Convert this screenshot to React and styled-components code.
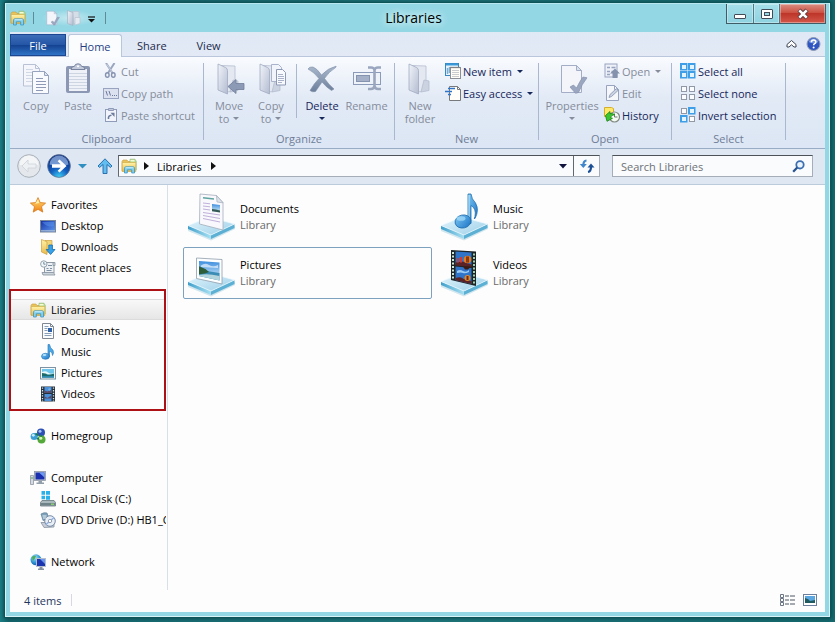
import React from 'react';
import styled, { createGlobalStyle, css } from 'styled-components';

const GlobalStyle = createGlobalStyle`
  * {
    box-sizing: border-box;
  }
  body {
    margin: 0;
    background: #1b7c80;
    font-family: 'Open Sans', 'Noto Sans', sans-serif;
    font-size: 11px;
    color: #000;
  }
  button, input {
    font: inherit;
    color: inherit;
  }
  button {
    display: flex;
    align-items: center;
    padding: 0;
    border: 0;
    background: none;
    white-space: nowrap;
  }
  svg {
    display: block;
    flex: none;
  }
`;

/* ---------- shared gradients ---------- */

const Grad = ({ id, from, to, x2 = 0, y2 = 1 }) => (
  <linearGradient id={id} x1="0" y1="0" x2={x2} y2={y2}>
    <stop offset="0" stopColor={from} />
    <stop offset="1" stopColor={to} />
  </linearGradient>
);

const DefsSvg = styled.svg`
  position: absolute;
  width: 0;
  height: 0;
`;

const Gradients = () => (
  <DefsSvg aria-hidden="true">
    <defs>
      <Grad id="folder" from="#fff3a8" to="#e9b94a" />
      <Grad id="note" from="#7cc8f5" to="#1a72c4" x2={1} />
      <Grad id="star" from="#ffe27a" to="#f07f12" />
      <Grad id="grey" from="#f1f4fa" to="#b3bcd0" x2={1} />
      <Grad id="screen" from="#1430a8" to="#5f9cf0" x2={1} />
      <Grad id="tray" from="#e4f6fd" to="#9ccfe8" x2={1} />
      <Grad id="traySide" from="#3f9fcb" to="#a8e0f2" x2={1} y2={0} />
      <Grad id="cross" from="#a9b8cc" to="#6c7f9b" />
      <Grad id="photo" from="#3d8ede" to="#e2f6fb" />
      <radialGradient id="orb" cx=".5" cy="1" r=".9">
        <stop offset="0" stopColor="#3fd4f7" />
        <stop offset=".45" stopColor="#1460c0" />
        <stop offset="1" stopColor="#0b2e80" />
      </radialGradient>
      <radialGradient id="globe" cx=".4" cy=".3" r=".8">
        <stop offset="0" stopColor="#9fe4f5" />
        <stop offset=".6" stopColor="#2a8fd0" />
        <stop offset="1" stopColor="#0e4d9a" />
      </radialGradient>
    </defs>
  </DefsSvg>
);

/* ---------- icons ---------- */

const Icon = ({ w = 16, h = 16, children }) => (
  <svg width={w} height={h} viewBox={`0 0 ${w} ${h}`} fill="none" aria-hidden="true">
    {children}
  </svg>
);

const LibrariesIcon = () => (
  <Icon>
    <path d="M1 3.5 2 2h4l1 1.5h6.5V13H1z" fill="#e8c35b" stroke="#c79a3a" strokeWidth=".6" />
    <path d="M9 1.2h5l1.2 2V12H9z" fill="#b9dc94" stroke="#8fb56d" strokeWidth=".6" />
    <path d="M9.5 2h4v1.4h-4z" fill="#f6fbd4" />
    <path d="M1.2 4.5h13.6V13.5H1.2z" fill="url(#folder)" stroke="#d0a640" strokeWidth=".6" />
    <path d="M3.5 15V10.2Q3.5 8.8 5 8.8h7q1.5 0 1.5 1.4V15h-2.8v-3.2H6.3V15z" fill="#7fd0f0" stroke="#2f8dbd" strokeWidth=".7" />
    <path d="M4.5 9.7h8" stroke="#dff6ff" strokeWidth=".8" />
  </Icon>
);

const CopyIcon = () => (
  <Icon w={32} h={32}>
    <path d="M3.5 1.5h12l4 4V23h-16z" fill="#f4f6fb" stroke="#b9c2d5" />
    <path d="M15.500 1.500v4h4" stroke="#b9c2d5" />
    <path d="M6 6.500h7M6 9.500h8M6 12.500h8M6 15.500h8M6 18.500h8" stroke="#d0d7e5" />
    <path d="M12.500 8.500h12l4 4v18h-16z" fill="#f8fafd" stroke="#98a3bd" />
    <path d="M24.500 8.500v4h4z" fill="#dfe5f0" stroke="#98a3bd" />
    <path d="M16 15.500h7M16 18.500h10M16 21.500h10M16 24.500h10M16 27.500h7" stroke="#8d99b5" />
  </Icon>
);

const PasteIcon = () => (
  <Icon w={32} h={32}>
    <rect x="4" y="3" width="24" height="27" rx="2" fill="#8c97b3" />
    <rect x="7" y="6" width="18" height="22" fill="#eef1f8" />
    <path d="M7 10.500h18M7 13.500h18M7 16.500h18M7 19.500h18M7 22.500h18M7 25.500h18" stroke="#cdd4e2" />
    <path d="M9 6.500Q9 3.500 12.500 3.200 13 .8 16 .8t3.500 2.400Q23 3.500 23 6.500z" fill="#c3cadb" stroke="#6d7997" strokeWidth=".9" />
    <circle cx="16" cy="3.200" r="1" fill="#fff" />
  </Icon>
);

const CutIcon = () => (
  <Icon>
    <path d="M3 0l6.500 10M11.500 0 5 10" stroke="#9aa6bf" strokeWidth="2" />
    <path d="M3.600 1l5.500 8" stroke="#e4e9f2" strokeWidth=".6" />
    <ellipse cx="4.300" cy="12" rx="1.800" ry="2.300" stroke="#8693b0" strokeWidth="1.400" />
    <ellipse cx="10.300" cy="12" rx="1.800" ry="2.300" stroke="#8693b0" strokeWidth="1.400" />
  </Icon>
);

const CopyPathIcon = () => (
  <Icon>
    <rect x=".5" y="3.500" width="15" height="10" fill="#dbe1ef" stroke="#97a3bf" />
    <path d="M3 6l1.500 4.500M6 6l1.500 4.500" stroke="#6b7a9d" />
    <path d="M9 10.500h1M11 10.500h1M13 10.500h1" stroke="#6b7a9d" />
  </Icon>
);

const ShortcutIcon = () => (
  <Icon>
    <rect x="2.500" y="2.500" width="11" height="12" fill="#f1f4fa" stroke="#8f9bb8" />
    <path d="M5.500 1.500h5v2h-5z" fill="#c3cadb" stroke="#8f9bb8" />
    <path d="M5.500 12Q5 8.500 8.500 8.200" stroke="#6b7a9d" strokeWidth="1.600" />
    <path d="M7.500 5.800h4V10z" fill="#6b7a9d" />
  </Icon>
);

const GreyFolder = () => (
  <>
    <path d="M8 2.500 22 3V26l-6 3-8-4z" fill="#e3e8f1" stroke="#b5bed1" strokeWidth=".8" />
    <path d="M20 17l5 1v9.500l-8 1.500z" fill="#cbd2e0" stroke="#b5bed1" strokeWidth=".8" />
    <path d="M5 1l7.500 3.500q2 1 2 3V31L5 27z" fill="url(#grey)" stroke="#a1abc2" strokeWidth=".8" />
  </>
);

const MoveToIcon = () => (
  <Icon w={32} h={32}>
    <GreyFolder />
    <path d="M15 23.500l8-7v4h8v6h-8v4z" fill="#8d9ab5" stroke="#6f7d9b" strokeWidth=".8" />
  </Icon>
);

const CopyToIcon = () => (
  <Icon w={32} h={32}>
    <GreyFolder />
    <path d="M16.500 1.500h7l3 3v14h-10z" fill="#f1f4fa" stroke="#a9b3ca" />
    <path d="M21.500 6.500h6l3 3V22h-9z" fill="#f8fafd" stroke="#8d99b5" />
    <path d="M23 11.500h5M23 13.500h6M23 15.500h6M23 17.500h6M23 19.500h4" stroke="#94a0bb" strokeWidth=".8" />
  </Icon>
);

const NewFolderIcon = () => (
  <Icon w={32} h={32}>
    <GreyFolder />
  </Icon>
);

const DeleteIcon = () => (
  <Icon w={32} h={32}>
    <path d="M2 6q1-2.500 5-2 4 1.500 8.500 8Q22 5 30 3.200q.8.800-1 1.800-6 3.500-10.500 10.500Q23 22 28 26l-2.500 1.500Q20 24 16 19q-4 6-6.500 9.500-3 1-5.500-1Q8 20.500 13 15.500 8 9 2 6z" fill="url(#cross)" stroke="#7d8da8" strokeWidth=".6" />
  </Icon>
);

const RenameIcon = () => (
  <Icon w={32} h={32}>
    <rect x="2.500" y="9.500" width="27" height="12" fill="#eef2f9" stroke="#8a9ab8" />
    <rect x="5.500" y="12.500" width="13" height="6" fill="#a3b0c8" stroke="#8593b0" />
    <path d="M17 4.500h3q3 0 3.500 2.500v16q-.5 3-3.500 3h-3M30 4.500h-3q-3 0-3.500 2.500v16q.5 3 3.500 3h3" stroke="#9aa6be" strokeWidth="2.600" />
  </Icon>
);

const NewItemIcon = () => (
  <Icon>
    <rect x=".5" y=".5" width="13" height="12" fill="#e8f4fc" stroke="#3a86c0" />
    <path d="M1 1.500h12" stroke="#3a9ad8" strokeWidth="2" />
    <path d="M2.500 5v6M4.500 4v6" stroke="#7aaed4" strokeWidth="1.500" />
    <rect x="5.500" y="4.500" width="10" height="11" fill="#fffdf5" stroke="#8c8f95" />
    <path d="M5.500 4.500h10" stroke="#777" strokeWidth="1.500" strokeDasharray="1 1" />
    <path d="M7 7.500h7M7 9.500h7M7 11.500h7M7 13.500h7" stroke="#c9cbcf" />
  </Icon>
);

const EasyAccessIcon = () => (
  <Icon>
    <path d="M4.500 1.500h8l3 3v11h-11z" fill="#fffef8" stroke="#77797d" />
    <path d="M12.500 1.500v3h3" stroke="#77797d" />
    <path d="M3 3.500h7M0 6.500h7M3 9.500h3" stroke="#2f74c8" strokeWidth="1.400" />
  </Icon>
);

const PropertiesIcon = ({ size = 32 }) => (
  <svg width={size} height={size} viewBox="0 0 32 32" fill="none" aria-hidden="true">
    <path d="M5.500 2.500h15l5 5v22h-20z" fill="#f3f5fb" stroke="#a3aec6" />
    <path d="M20.500 2.500v5h5z" fill="#dbe1ec" stroke="#a3aec6" />
    <path d="M14 24l3.500-2 3 3q4-8 6.500-11l4 .8Q26 21 22.500 29.500l-3 .8z" fill="#9ba7c0" stroke="#8491ad" strokeWidth=".7" />
  </svg>
);

const OpenIcon = () => (
  <Icon>
    <rect x="1" y="1" width="12" height="13" fill="#eef1f8" stroke="#97a3bf" />
    <path d="M3 4.500h3M3 8.500h3M7.500 4.500h4M7.500 8.500h2M3 11.500h3" stroke="#97a3bf" strokeWidth="1.400" />
    <path d="M11 5.500l5 5h-2.500V15h-5v-4.500H6z" fill="#8492ae" />
  </Icon>
);

const EditIcon = () => (
  <Icon>
    <path d="M2.500.500h8l4 4v11h-12z" fill="#f5f7fb" stroke="#97a3bf" />
    <path d="M10.500.500v4h4" stroke="#97a3bf" />
    <path d="M5 12.500l1-3L12.500 3.500l1.500 2-6.500 6z" fill="#cbd2e2" stroke="#8693b0" strokeWidth=".8" />
  </Icon>
);

const HistoryIcon = () => (
  <Icon>
    <path d="M.500.500h7l2 1v8h-9z" fill="#ffe96a" stroke="#d5ad2c" />
    <circle cx="10.500" cy="10" r="5" fill="#f6faf4" stroke="#808a80" strokeWidth="1.200" />
    <path d="M10.500 6.500V10h3" stroke="#6d776d" />
    <path d="M1.500 8.500 6 4.500v2.200q3-.7 4.500 1-3 0-4 2.800l2 .8-5.500 3z" fill="#3cc531" stroke="#17820f" strokeWidth=".8" />
  </Icon>
);

/* four squares, the ones listed in "on" are selected */
const SquaresIcon = ({ on = [] }) => (
  <Icon>
    {[[0, 0], [8, 0], [0, 8], [8, 8]].map(([x, y], i) =>
      on.includes(i) ? (
        <g key={i}>
          <rect x={x} y={y} width="7.500" height="7.500" fill="#3f9ee8" />
          <rect x={x + 2} y={y + 2} width="4" height="4" fill="#e4f4ff" />
        </g>
      ) : (
        <rect key={i} x={x + 1.5} y={y + 1.5} width="5" height="5" fill="#fafcff" stroke="#9299a6" />
      )
    )}
  </Icon>
);

const StarIcon = () => (
  <Icon>
    <path d="M8 .6l2.200 5 5.400.5-4.100 3.600 1.300 5.400L8 12.300l-4.800 2.800 1.300-5.400L.4 6.100l5.400-.5z" fill="url(#star)" stroke="#d9781a" strokeWidth=".8" />
    <path d="M8 2.500l1.200 3.600-4 .6z" fill="#fff2b0" />
  </Icon>
);

const DesktopIcon = () => (
  <Icon>
    <rect x=".5" y="2.500" width="15" height="11.500" fill="url(#screen)" stroke="#7a8798" />
    <path d="M1 12.800h14" stroke="#b3c3d8" />
    <path d="M2 4q6 6 12 4V4z" fill="#5b97ee" opacity=".5" />
  </Icon>
);

const DownloadsIcon = () => (
  <Icon>
    <path d="M5 1.500h7V13H5z" fill="#f0d67a" stroke="#cda13c" strokeWidth=".7" />
    <path d="M1.500.5 7 2.800V15.500L1.500 13z" fill="url(#folder)" stroke="#cda13c" strokeWidth=".7" />
    <path d="M8.800 6h3.600v4.500H15L10.600 15.500 6.200 10.500h2.600z" fill="#36a3e8" stroke="#1769ad" strokeWidth=".8" />
  </Icon>
);

const RecentIcon = () => (
  <Icon>
    <path d="M4.500 2.500H14v10.500H4.500z" fill="#eef1f4" stroke="#8f9aa5" />
    <path d="M2 12.500h11.500l1.500 2.500H3zM13 2.500h2v3h-2z" fill="#ccd4db" stroke="#8793a0" strokeWidth=".8" />
    <path d="M8 5.500h4M6.500 8.500h2M10 8.500h2M6.500 10.500h5" stroke="#7d8fa2" />
    <circle cx="3.800" cy="4" r="3.200" fill="#f2f8fa" stroke="#8d9aa5" strokeWidth=".9" />
    <path d="M3.800 2v2.200H5.500" stroke="#57738c" strokeWidth=".8" />
  </Icon>
);

const DocumentIcon = () => (
  <Icon>
    <path d="M2.500.500h8l3 3v12h-11z" fill="#fbfcfe" stroke="#7f8791" />
    <path d="M10.500.500v3h3" stroke="#7f8791" />
    <path d="M4.500 3.500h4M4.500 5.500h3M4.500 7.500h3M4.500 10.500h7M4.500 12.500h7" stroke="#8aa0b8" />
    <rect x="8" y="5" width="4" height="4" fill="#2f62a8" />
  </Icon>
);

const MusicIcon = () => (
  <Icon>
    <path d="M8 .5h1.500Q10 4 13 6.200q1.300 2.500-.5 5.300.3-3.500-3-4.500v5.500H8z" fill="#4aa8e6" stroke="#1d6fb4" strokeWidth=".6" />
    <ellipse cx="5.500" cy="12.300" rx="4" ry="3" fill="url(#note)" stroke="#1d6fb4" strokeWidth=".6" />
    <ellipse cx="4.500" cy="11" rx="1.800" ry="1" fill="#b5e1fa" />
  </Icon>
);

const PictureIcon = () => (
  <Icon>
    <rect x=".5" y="2.500" width="15" height="11.500" fill="#f7fafb" stroke="#7d93a3" />
    <rect x="2" y="4" width="12" height="8.500" fill="#6fc6ea" />
    <path d="M2 7q4-1.500 6 .5t6 .5v1.500H2z" fill="#e8f7f7" />
    <path d="M2 8q4 0 5 1.500 4 .5 7-1V12.500H2z" fill="#1d6a6b" />
    <path d="M2 11h12v1.500H2z" fill="#2c86b0" />
  </Icon>
);

const FilmHoles = ({ x }) => (
  <path d={`M${x} 1.500v14`} stroke="#d7e2ea" strokeWidth="1.300" strokeDasharray="1.300 1.300" />
);

const VideoIcon = () => (
  <Icon>
    <rect x="1" y=".5" width="14" height="15" fill="#23303c" />
    <FilmHoles x={2.5} />
    <FilmHoles x={13.5} />
    <path d="M4.500 1h7v6h-7zM4.500 8h7v7h-7z" fill="#4a8fd8" />
    <path d="M4.500 4.500l3 1 3.500-2V7h-6.500zM4.500 10.500l3 1.500 3.500-2.500v3h-6.500z" fill="#5f4a66" />
    <circle cx="9.500" cy="3.500" r="1.200" fill="#79b4e8" />
  </Icon>
);

const HomegroupIcon = () => (
  <Icon>
    <circle cx="4.200" cy="8.500" r="3.600" fill="#3b9fd6" />
    <circle cx="11" cy="4.500" r="4" fill="#2b4fb4" />
    <circle cx="11.500" cy="11.500" r="4" fill="#55a83a" />
    <circle cx="3.300" cy="7.300" r="1.400" fill="#c8effa" />
    <circle cx="10" cy="3.200" r="1.500" fill="#a5c4f5" />
    <circle cx="10.700" cy="10.200" r="1.600" fill="#d4f3b4" />
    <path d="M5.500 5.500l3 2M7 10.500l2 .5M11 7v2" stroke="#1d7a54" strokeWidth="1.600" />
  </Icon>
);

const ComputerIcon = () => (
  <Icon>
    <path d="M.5 5.500h3v9h-3z" fill="#d4dae0" stroke="#8c97a3" strokeWidth=".8" />
    <circle cx="2" cy="8" r=".8" fill="#3ca33c" />
    <rect x="4.500" y="1.500" width="11" height="9" fill="#c9d0da" stroke="#8c97a3" strokeWidth=".8" />
    <rect x="5.500" y="2.500" width="9" height="7" fill="#1a2fae" />
    <path d="M9 2.500h5.500v5z" fill="#6f9bf3" />
    <path d="M8.500 11h3.500v1.500h2V14H6.500v-1.500h2z" fill="#939eab" />
  </Icon>
);

const DiskIcon = () => (
  <Icon>
    <path d="M1.500 0h3.500v3.800H1.500zM6 0h4v3.800H6zM1.500 4.800h3.500v3.500H1.500zM6 4.800h4v4H6z" fill="#2cb0ea" />
    <path d="M.5 11.500 2 9.500h12l1.500 2v3.500h-15z" fill="#a9b8bd" stroke="#65777d" strokeWidth=".8" />
    <path d="M1 12h14v2.500H1z" fill="#6f8389" />
    <path d="M11 13.200h3" stroke="#8be36b" strokeWidth="1.200" />
  </Icon>
);

const DvdIcon = () => (
  <Icon>
    <path d="M1 2q3-2 6-1l2 6-6 1.500z" fill="#7fa2ba" stroke="#5d7f98" strokeWidth=".7" />
    <path d="M1 10.500h13V15L4 15.500z" fill="#c8ced8" stroke="#8792a1" strokeWidth=".8" />
    <circle cx="10" cy="9" r="5.300" fill="#e8eef6" stroke="#6c7f9a" strokeWidth=".9" />
    <path d="M10 9 14 5.500M10 9 6 12.500" stroke="#8fb0e2" strokeWidth="1.400" />
    <circle cx="10" cy="9" r="1.700" fill="#fff" stroke="#7b8da6" strokeWidth=".8" />
    <path d="M2.500 4h4M3 6h3" stroke="#f3f9fc" strokeWidth=".9" />
  </Icon>
);

const NetworkIcon = () => (
  <Icon>
    <circle cx="6" cy="5.800" r="5.500" fill="url(#globe)" />
    <path d="M2 3q2.500-2 4-1l-1 2.500L3 7zM6 7l3-1 1 2-2.500 2.500z" fill="#4fae5a" />
    <rect x="6.500" y="4.500" width="9" height="8" fill="#1b34b0" stroke="#b5c0cc" />
    <path d="M10 5h5v5z" fill="#6c98f0" />
    <path d="M9.500 13h3v1.500h1.500V16H8v-1.500h1.500z" fill="#8793a1" />
  </Icon>
);

/* ---------- large library icons ---------- */

const Tray = () => (
  <>
    <path d="M1 35v3l23 9.500L48 36v-3z" fill="#8fc4da" opacity=".4" />
    <path d="M1 32.500 24 42V46L1 36z" fill="url(#traySide)" />
    <path d="M24 42 47.500 31v4L24 46z" fill="#5cb0d3" />
    <path d="M1 32.500 22 24l25.500 7L24 42z" fill="url(#tray)" stroke="#f2fbff" strokeWidth=".7" />
  </>
);

const DocumentsLarge = () => (
  <Icon w={48} h={48}>
    <Tray />
    <path d="M13 1 29.500 2.500l6.500 7V37L12.500 31z" fill="#f8f8fd" stroke="#a3adbb" strokeWidth=".8" />
    <path d="M29.500 2.500l.5 6.500 6 .8z" fill="#dde3ea" stroke="#a3adbb" strokeWidth=".7" />
    <path d="M16 4.800l11 1.200" stroke="#5fa49f" strokeWidth="1.600" />
    <path d="M16 10l7 .8M16 13l7 .8M16 16l7 1M16 19.500l17 2.500M16 22.500l17 3M16 25.500l17 3.500" stroke="#c0b0da" strokeWidth="1" />
    <path d="M25 11l8 1v7.500l-8-1.200z" fill="url(#photo)" />
    <path d="M25 16l4 .5 4 1v2l-8-1.200z" fill="#355a56" />
  </Icon>
);

const PicturesLarge = () => (
  <Icon w={48} h={48}>
    <Tray />
    <path d="M9.500 9 35 10.500v24.500L9.500 29.500z" fill="#fdfeff" stroke="#8f9dac" strokeWidth=".8" />
    <path d="M12 12l20.500 1.400v18L12 27z" fill="url(#photo)" />
    <path d="M14 16.500q4-3 8-.5t9 0v3l-17-1z" fill="#fff" opacity=".6" />
    <path d="M12 17q4 1.500 8 5l12.500 2v7.400L12 27z" fill="#3c8db5" />
    <path d="M12 17.500q6 1.500 10 5.500-5 2.500-10 2z" fill="#2e5d3a" />
    <path d="M12 26q8-2 20.500 1v4.400L12 27z" fill="#b5d5dc" />
  </Icon>
);

const MusicLarge = () => (
  <Icon w={48} h={48}>
    <Tray />
    <path d="M28 1h3q.5 5 4.500 9 4 7-.5 15.500-1.500 1 0-2 1.500-8-4-11v18h-3z" fill="url(#note)" stroke="#1f6cac" strokeWidth=".8" />
    <path d="M29 2v26" stroke="#bfe7fb" />
    <ellipse cx="23" cy="28.500" rx="8" ry="6.500" fill="url(#note)" stroke="#1f6cac" strokeWidth=".8" transform="rotate(-12 23 28.500)" />
    <ellipse cx="21" cy="25.500" rx="4.500" ry="2.300" fill="#9fd8f8" opacity=".8" />
  </Icon>
);

const VideosLarge = () => (
  <Icon w={48} h={48}>
    <Tray />
    <path d="M11 1 36 2.500V37L11 31z" fill="#1d2426" />
    <path d="M13 3v28" stroke="#cfe8d8" strokeWidth="2" strokeDasharray="2 1.500" />
    <path d="M34 4.500v31" stroke="#9fd0b0" strokeWidth="2" strokeDasharray="2 1.500" />
    <path d="M15.500 2.500l16 1v13l-16-1zM15.500 17.500l16 1.500V35l-16-3.800z" fill="#2f74c9" />
    <path d="M15.500 13.500l7-1 9 3v2.500l-16-1.500zM15.500 29q6-2 8 1l8 2v3l-16-3.800z" fill="#5b2325" />
    <path d="M17 9h2v4.500h-2zM20 8h2v5.500h-2z" fill="#d2382c" />
    <circle cx="27.500" cy="10.500" r="3.800" fill="#e87a1c" />
    <path d="M26 7.500h3v6h-3z" fill="#8a3a14" />
    <path d="M23 17.500h8l-3 3h-3z" fill="#3b1b12" />
    <path d="M17 22q3-2 6 0t6-1v2q-4 2-6 1t-6 0z" fill="#9ccbf2" />
    <circle cx="27.500" cy="29" r="3" fill="#e08a2a" />
    <path d="M26.500 27h2v4h-2z" fill="#7a2a14" />
  </Icon>
);

/* ---------- window frame ---------- */

const Desktop = styled.div`
  display: flex;
  min-height: 100vh;
  padding: 3px 5px 5px;
  background: linear-gradient(90deg, #1a8086, #14656d 1%, #1d777c 50%, #14696e);
`;

const Window = styled.div`
  display: flex;
  flex: 1;
  min-width: 0;
  flex-direction: column;
  padding: 0 4px 4px;
  border: 1px solid #d8f4f8;
  border-top-color: #b7e8f0;
  background: #93d7e4;
  box-shadow: 0 0 0 1px #0d5459, 0 0 4px 1px rgba(0, 30, 35, 0.6);
`;

const TitleBar = styled.header`
  display: grid;
  grid-template-columns: 1fr auto 1fr;
  height: 28px;
`;

const QuickAccess = styled.div`
  display: flex;
  align-items: center;
  gap: 7px;
  height: 28px;
`;

const QuickTools = styled.div`
  display: flex;
  align-items: center;
  gap: 6px;
  padding: 0 3px;
  background: radial-gradient(closest-side, rgba(255, 255, 255, 0.45), rgba(255, 255, 255, 0));
`;

const QuickLine = styled.span`
  width: 1px;
  height: 12px;
  background: #5b8c98;
`;

const Title = styled.h1`
  margin: 0 8px 0 0;
  font-size: 14px;
  font-weight: 400;
  line-height: 28px;
  text-shadow: 0 0 6px #e6fafd, 0 0 10px #e6fafd;
`;

const WindowButtons = styled.div`
  display: flex;
  justify-self: end;
  height: 20px;
  margin-right: -1px;
  border: 1px solid #3f5d66;
  border-top: 0;
`;

const WindowButton = styled.button`
  justify-content: center;
  width: ${(props) => (props.$close ? '46px' : '26px')};
  border-left: ${(props) => (props.$first ? '0' : '1px solid #4f7b86')};
  background: ${(props) =>
    props.$close ? 'linear-gradient(#dc8f83, #cc5243 45%, #bd3629 50%, #d3574a)' : 'linear-gradient(#a5dfea, #8fd3e0)'};
  box-shadow: inset 0 0 0 1px rgba(255, 255, 255, 0.35);
`;

/* ---------- ribbon ---------- */

const Tabs = styled.nav`
  display: flex;
  align-items: flex-end;
  height: 25px;
  border-bottom: 1px solid #b9c6dc;
  background: linear-gradient(#dfe8f5, #e3eaf6);
`;

const Tab = styled.button`
  justify-content: center;
  height: 22px;
  padding: 0 15px;
  color: #1c2a4c;
  ${(props) =>
    props.$file &&
    css`
      width: 56px;
      margin-right: 2px;
      border: 1px solid #1d4690;
      color: #fff;
      background: linear-gradient(#3c6db8, #2456a6 48%, #14418f 50%, #2f73c6);
    `}
  ${(props) =>
    props.$active &&
    css`
      width: 54px;
      height: 23px;
      margin-bottom: -1px;
      padding: 0;
      border: 1px solid #b9c6dc;
      border-bottom: 0;
      border-radius: 3px 3px 0 0;
      color: #1e3f86;
      background: #fbfcfe;
    `}
`;

const TabTools = styled.div`
  display: flex;
  align-items: center;
  align-self: center;
  gap: 9px;
  margin-left: auto;
  padding-right: 4px;
`;

const Ribbon = styled.section`
  display: flex;
  align-items: flex-start;
  height: 92px;
  padding-top: 3px;
  border-bottom: 1px solid #9aabc5;
  background: linear-gradient(#f9fbfe, #e2eaf6 45%, #dce6f4);
`;

const Group = styled.div`
  width: ${(props) => props.$width}px;
`;

const GroupBody = styled.div`
  display: flex;
  height: 71px;
  padding-left: ${(props) => props.$indent || 4}px;
`;

const GroupName = styled.div`
  line-height: 16px;
  text-align: center;
  color: #6f7d97;
`;

const Line = styled.span`
  width: 1px;
  height: ${(props) => (props.$inner ? '54px' : '77px')};
  margin: ${(props) => (props.$inner ? '4px 4px 0' : '3px 0 0')};
  background: #a9b7cf;
`;

const BigButton = styled.button`
  flex-direction: column;
  width: ${(props) => props.$width || 42}px;
  padding-top: 3px;
  line-height: 13px;
  color: ${(props) => (props.$on ? '#16275a' : '#858c9b')};
`;

const BigLabel = styled.span`
  display: flex;
  flex-direction: column;
  align-items: center;
  margin-top: 4px;
`;

const LabelLine = styled.span`
  display: flex;
  align-items: center;
  justify-content: center;
  gap: 4px;
  height: 13px;
`;

const SmallColumn = styled.div`
  display: flex;
  flex-direction: column;
  padding-left: ${(props) => props.$left || 3}px;
`;

const SmallButton = styled.button`
  gap: 2px;
  height: 22px;
  color: ${(props) => (props.$on ? '#16275a' : '#858c9b')};
`;

const Caret = styled.span`
  border: 3px solid transparent;
  border-top-color: currentColor;
  border-bottom: 0;
  margin-left: ${(props) => (props.$gap ? '3px' : '0')};
`;

/* ---------- address row ---------- */

const NavRow = styled.div`
  display: flex;
  align-items: center;
  height: 36px;
  padding: 0 12px 1px 7px;
  border-bottom: 1px solid #bccbdc;
  background: #dfe8f2;
`;

const NavButton = styled.button`
  margin-right: ${(props) => props.$gap || 0}px;
  color: ${(props) => props.$color || 'inherit'};
`;

const Address = styled.div`
  display: flex;
  align-items: center;
  flex: 1;
  min-width: 0;
  height: 22px;
  padding-left: 2px;
  border: 1px solid #a5adb8;
  border-top-color: #4d5258;
  border-left-color: #62686f;
  background: #f9fbfd;
`;

const Crumb = styled.button`
  padding: 0 7px;
`;

const AddressButton = styled.button`
  align-self: stretch;
  justify-content: center;
  width: ${(props) => props.$width}px;
  margin-left: ${(props) => (props.$push ? 'auto' : '0')};
  border-left: ${(props) => (props.$push ? '0' : '1px solid #62686f')};
`;

const SearchBox = styled.label`
  display: flex;
  align-items: center;
  width: 201px;
  height: 22px;
  margin-left: 12px;
  padding: 0 7px 0 8px;
  border: 1px solid #a5adb8;
  border-top-color: #4d5258;
  background: #f9fbfd;
`;

const SearchInput = styled.input`
  flex: 1;
  min-width: 0;
  padding: 0;
  border: 0;
  outline: 0;
  background: none;
  &::placeholder {
    color: #6d7176;
    opacity: 1;
  }
`;

/* ---------- body ---------- */

const Body = styled.main`
  display: flex;
  flex: 1;
  background: #fdfdfd;
`;

const Sidebar = styled.aside`
  display: flex;
  flex: none;
  flex-direction: column;
  gap: 21px;
  width: 158px;
  padding-top: 9px;
  border-right: 1px solid #d9dfe8;
`;

const TreeGroup = styled.div`
  position: relative;
  ${(props) =>
    props.$marked &&
    css`
      &::after {
        content: '';
        position: absolute;
        inset: -10px 1px -7px -1px;
        border: 2px solid #ad1015;
        pointer-events: none;
      }
    `}
`;

const TreeItem = styled.a`
  display: flex;
  align-items: center;
  gap: 5px;
  height: 21px;
  margin-right: 1px;
  padding-left: ${(props) => (props.$child ? '30px' : '20px')};
  overflow: hidden;
  white-space: nowrap;
  color: #000;
  text-decoration: none;
  ${(props) =>
    props.$selected &&
    css`
      border: solid #dcdcdc;
      border-width: 1px 0;
      background: linear-gradient(#f8f8f8, #e6e6e6);
    `}
`;

const Files = styled.section`
  display: grid;
  flex: 1;
  align-content: start;
  grid-template-columns: repeat(auto-fill, 249px);
  gap: 4px;
  padding: 6px 15px;
`;

const Tile = styled.a`
  display: flex;
  align-items: center;
  gap: 5px;
  height: 52px;
  padding: 0 3px;
  border: 1px solid ${(props) => (props.$focused ? '#7da2c0' : 'transparent')};
  border-radius: 2px;
  line-height: 16px;
  color: #000;
  text-decoration: none;
`;

const Muted = styled.div`
  color: #6a6a6a;
`;

const StatusBar = styled.footer`
  display: flex;
  align-items: center;
  height: 22px;
  padding: 0 8px 2px 14px;
  color: #1f3560;
  background: #fdfdfd;
`;

const StatusLine = styled.span`
  width: 1px;
  height: 12px;
  margin-left: 10px;
  background: #d5dae2;
`;

const Views = styled.div`
  display: flex;
  gap: 8px;
  margin-left: auto;
`;

/* ---------- pieces ---------- */

const Big = ({ icon, lines, caret, below, on, width }) => (
  <BigButton $on={on} $width={width}>
    {icon}
    <BigLabel>
      {lines.map((line, i) => (
        <LabelLine key={line}>
          {line}
          {caret && i === lines.length - 1 && <Caret />}
        </LabelLine>
      ))}
      {below && (
        <LabelLine>
          <Caret />
        </LabelLine>
      )}
    </BigLabel>
  </BigButton>
);

const Small = ({ icon, label, caret, on }) => (
  <SmallButton $on={on}>
    {icon}
    {label}
    {caret && <Caret $gap />}
  </SmallButton>
);

const tree = [
  [
    { label: 'Favorites', icon: <StarIcon /> },
    { label: 'Desktop', icon: <DesktopIcon />, child: true },
    { label: 'Downloads', icon: <DownloadsIcon />, child: true },
    { label: 'Recent places', icon: <RecentIcon />, child: true },
  ],
  [
    { label: 'Libraries', icon: <LibrariesIcon />, selected: true },
    { label: 'Documents', icon: <DocumentIcon />, child: true },
    { label: 'Music', icon: <MusicIcon />, child: true },
    { label: 'Pictures', icon: <PictureIcon />, child: true },
    { label: 'Videos', icon: <VideoIcon />, child: true },
  ],
  [{ label: 'Homegroup', icon: <HomegroupIcon /> }],
  [
    { label: 'Computer', icon: <ComputerIcon /> },
    { label: 'Local Disk (C:)', icon: <DiskIcon />, child: true },
    { label: 'DVD Drive (D:) HB1_C', icon: <DvdIcon />, child: true },
  ],
  [{ label: 'Network', icon: <NetworkIcon /> }],
];

const libraries = [
  { name: 'Documents', icon: <DocumentsLarge /> },
  { name: 'Music', icon: <MusicLarge /> },
  { name: 'Pictures', icon: <PicturesLarge />, focused: true },
  { name: 'Videos', icon: <VideosLarge /> },
];

const Header = () => (
  <TitleBar>
    <QuickAccess>
      <LibrariesIcon />
      <QuickLine />
      <QuickTools>
        <button aria-label="Properties">
          <PropertiesIcon size={16} />
        </button>
        <button aria-label="New folder">
          <Icon>
            <path d="M6 1.500h7V13l-5 1z" fill="#d5dde6" stroke="#b7c3d0" strokeWidth=".7" />
            <path d="M1.500.5 7 2.500V15.500L1.500 13.500z" fill="url(#grey)" stroke="#a5b2c2" strokeWidth=".7" />
            <path d="M9 7.500h5v6L9 15z" fill="#e5ebf2" stroke="#b7c3d0" strokeWidth=".7" />
          </Icon>
        </button>
        <button aria-label="Customize Quick Access Toolbar">
          <Icon w={7} h={16}>
            <path d="M0 7h7" stroke="#111" strokeWidth="1.200" />
            <path d="M0 9h7l-3.500 3.500z" fill="#111" />
          </Icon>
        </button>
      </QuickTools>
      <QuickLine />
    </QuickAccess>
    <Title>Libraries</Title>
    <WindowButtons>
      <WindowButton $first aria-label="Minimize">
        <Icon w={14}>
          <rect x="1.500" y="8.500" width="11" height="4" rx=".5" fill="#fff" stroke="#434a58" />
        </Icon>
      </WindowButton>
      <WindowButton aria-label="Maximize">
        <Icon w={14}>
          <rect x="1.500" y="3.500" width="11" height="9" rx=".5" fill="#fff" stroke="#434a58" />
          <rect x="4.500" y="6.500" width="5" height="3" fill="#93d7e4" stroke="#434a58" />
        </Icon>
      </WindowButton>
      <WindowButton $close aria-label="Close">
        <Icon w={14}>
          <path d="M3 4l8 8M11 4l-8 8" stroke="#5b3b40" strokeWidth="4.400" />
          <path d="M3.300 4.300l7.400 7.400M10.700 4.300l-7.400 7.400" stroke="#fff" strokeWidth="2.600" />
        </Icon>
      </WindowButton>
    </WindowButtons>
  </TitleBar>
);

const RibbonTabs = () => (
  <Tabs>
    <Tab $file>File</Tab>
    <Tab $active>Home</Tab>
    <Tab>Share</Tab>
    <Tab>View</Tab>
    <TabTools>
      <button aria-label="Minimize the Ribbon">
        <Icon w={11} h={10}>
          <path d="M1 5.500 5.500 1.500 10 5.500V8L8 8 5.500 5.800 3 8H1z" fill="#fff" stroke="#3c4350" />
        </Icon>
      </button>
      <button aria-label="Help">
        <Icon w={15}>
          <circle cx="7.500" cy="8" r="6.500" fill="#2f55c0" stroke="#8f9bb5" />
          <path d="M2.500 6Q4 2.500 7.500 2.500t5 3.500q-5 2.500-10 0z" fill="#90aef0" opacity=".7" />
          <path d="M5.300 6.200q.2-2.200 2.300-2.200t2.200 1.900q0 1.200-1.200 1.800-1 .6-1 1.600" stroke="#fff" strokeWidth="1.500" />
          <circle cx="7.600" cy="11.600" r="1" fill="#fff" />
        </Icon>
      </button>
    </TabTools>
  </Tabs>
);

const RibbonBar = () => (
  <Ribbon>
    <Group $width={193}>
      <GroupBody $indent={5}>
        <Big icon={<CopyIcon />} lines={['Copy']} />
        <Big icon={<PasteIcon />} lines={['Paste']} />
        <SmallColumn $left={4}>
          <Small icon={<CutIcon />} label="Cut" />
          <Small icon={<CopyPathIcon />} label="Copy path" />
          <Small icon={<ShortcutIcon />} label="Paste shortcut" />
        </SmallColumn>
      </GroupBody>
      <GroupName>Clipboard</GroupName>
    </Group>
    <Line />
    <Group $width={190}>
      <GroupBody>
        <Big icon={<MoveToIcon />} lines={['Move', 'to']} caret />
        <Big icon={<CopyToIcon />} lines={['Copy', 'to']} caret />
        <Line $inner />
        <Big icon={<DeleteIcon />} lines={['Delete']} below on />
        <Big icon={<RenameIcon />} lines={['Rename']} width={47} />
      </GroupBody>
      <GroupName>Organize</GroupName>
    </Group>
    <Line />
    <Group $width={143}>
      <GroupBody>
        <Big icon={<NewFolderIcon />} lines={['New', 'folder']} />
        <SmallColumn $left={4}>
          <Small icon={<NewItemIcon />} label="New item" caret on />
          <Small icon={<EasyAccessIcon />} label="Easy access" caret on />
        </SmallColumn>
      </GroupBody>
      <GroupName>New</GroupName>
    </Group>
    <Line />
    <Group $width={132}>
      <GroupBody $indent={5}>
        <Big icon={<PropertiesIcon />} lines={['Properties']} below width={56} />
        <SmallColumn $left={4}>
          <Small icon={<OpenIcon />} label="Open" caret />
          <Small icon={<EditIcon />} label="Edit" />
          <Small icon={<HistoryIcon />} label="History" on />
        </SmallColumn>
      </GroupBody>
      <GroupName>Open</GroupName>
    </Group>
    <Line />
    <Group $width={113}>
      <GroupBody>
        <SmallColumn $left={4}>
          <Small icon={<SquaresIcon on={[0, 1, 2, 3]} />} label="Select all" on />
          <Small icon={<SquaresIcon />} label="Select none" on />
          <Small icon={<SquaresIcon on={[1, 2]} />} label="Invert selection" on />
        </SmallColumn>
      </GroupBody>
      <GroupName>Select</GroupName>
    </Group>
    <Line />
  </Ribbon>
);

const AddressRow = () => (
  <NavRow>
    <NavButton $gap={6} aria-label="Back">
      <Icon w={24} h={24}>
        <circle cx="12" cy="12" r="11.300" fill="#e4e8ec" stroke="#a9b0b8" />
        <path d="M2.500 11a9.500 9.500 0 0 1 19 0z" fill="#f3f5f7" />
        <path d="M5 12l6-6v4h8v4h-8v4z" fill="#eef1f4" stroke="#cdd2d8" strokeWidth=".8" />
      </Icon>
    </NavButton>
    <NavButton $gap={7} aria-label="Forward">
      <Icon w={24} h={24}>
        <circle cx="12" cy="12" r="11.400" fill="url(#orb)" stroke="#5f7494" strokeWidth=".8" />
        <path d="M2.500 10.500a9.500 9 0 0 1 19 0q-9.500 3-19 0z" fill="#a9c4ee" opacity=".65" />
        <path d="M19.500 12l-7 6.500-1.800-1.800 3-3H5v-3.400h8.700l-3-3 1.800-1.800z" fill="#fff" />
      </Icon>
    </NavButton>
    <NavButton $gap={10} $color="#2f8fc0" aria-label="Recent locations">
      <Icon w={9} h={6}>
        <path d="M0 1h9L4.500 5.500z" fill="currentColor" />
      </Icon>
    </NavButton>
    <NavButton $gap={5} aria-label="Up">
      <Icon w={16}>
        <path d="M8 .8 15 8l-1.600 1.500L10 6.500V15.500H6V6.500L2.600 9.500 1 8z" fill="#62bdf0" stroke="#1d68a8" strokeWidth=".9" />
      </Icon>
    </NavButton>
    <Address>
      <LibrariesIcon />
      <NavButton $gap={1} aria-label="Locations">
        <Icon w={12}>
          <path d="M7 4l5 4-5 4z" fill="#111" />
        </Icon>
      </NavButton>
      <Crumb>Libraries</Crumb>
      <Icon w={7} h={8}>
        <path d="M2 0l5 4-5 4z" fill="#111" />
      </Icon>
      <AddressButton $push $width={20} aria-label="Previous locations">
        <Icon w={8} h={5}>
          <path d="M0 0h8L4 4.500z" fill="#10143c" />
        </Icon>
      </AddressButton>
      <AddressButton $width={26} aria-label="Refresh">
        <Icon>
          <path d="M7.500 2.500Q4.500 2.800 4.300 7" stroke="#3f86cc" strokeWidth="2.200" />
          <path d="M.8 6h7L4.300 10z" fill="#3f86cc" />
          <path d="M9 14q3-.5 3-5" stroke="#1d4f96" strokeWidth="2.200" />
          <path d="M8.500 9.500h7L12 5.500z" fill="#1d4f96" />
        </Icon>
      </AddressButton>
    </Address>
    <SearchBox>
      <SearchInput type="text" placeholder="Search Libraries" aria-label="Search Libraries" />
      <Icon w={13} h={13}>
        <circle cx="8" cy="4.800" r="3.700" fill="#eaf4fd" stroke="#3d6fb0" strokeWidth="1.800" />
        <path d="M5.200 7.600 1.200 11.800" stroke="#27518f" strokeWidth="2.200" />
      </Icon>
    </SearchBox>
  </NavRow>
);

const App = () => (
  <Desktop>
    <GlobalStyle />
    <Gradients />
    <Window>
      <Header />
      <RibbonTabs />
      <RibbonBar />
      <AddressRow />
      <Body>
        <Sidebar>
          {tree.map((group, i) => (
            <TreeGroup key={i} $marked={i === 1}>
              {group.map((item) => (
                <TreeItem key={item.label} href="#" $child={item.child} $selected={item.selected}>
                  {item.icon}
                  {item.label}
                </TreeItem>
              ))}
            </TreeGroup>
          ))}
        </Sidebar>
        <Files>
          {libraries.map((library) => (
            <Tile key={library.name} href="#" $focused={library.focused}>
              {library.icon}
              <div>
                <div>{library.name}</div>
                <Muted>Library</Muted>
              </div>
            </Tile>
          ))}
        </Files>
      </Body>
      <StatusBar>
        4 items
        <StatusLine />
        <Views>
          <button aria-label="Details view">
            <Icon>
              <path d="M1.500 2.500h3v3h-3zM1.500 6.500h3v3h-3zM1.500 10.500h3v3h-3z" stroke="#6d7685" />
              <path d="M6 4h4M11 4h5M6 8h4M11 8h5M6 12h4M11 12h5" stroke="#4d5665" />
            </Icon>
          </button>
          <button aria-label="Large thumbnails view">
            <Icon w={14}>
              <rect x=".5" y="2.500" width="13" height="11" fill="#fff" stroke="#6c7f9c" />
              <rect x="2" y="4" width="10" height="7" fill="#5aa7e2" />
              <path d="M2 6q4 1 5 3l5-1v3H2z" fill="#1f5a5f" />
            </Icon>
          </button>
        </Views>
      </StatusBar>
    </Window>
  </Desktop>
);

export default App;
